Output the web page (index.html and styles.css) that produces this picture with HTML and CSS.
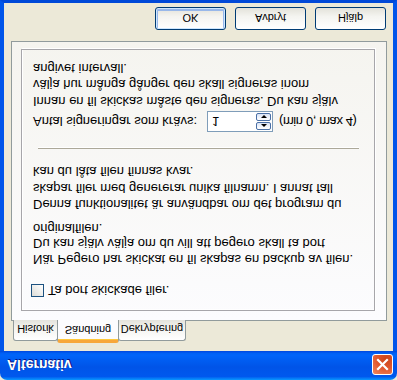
FILE: index.html
```html
<!DOCTYPE html>
<html lang="sv">
<head>
<meta charset="utf-8">
<title>Alternativ</title>
<link rel="stylesheet" href="styles.css">
</head>
<body>
<div class="window">
  <div class="titlebar">
    <span class="title">Alternativ</span>
    <button class="close" aria-label="Stäng">
      <svg width="13" height="13" viewBox="0 0 13 13"><path d="M2 2 L11 11 M11 2 L2 11" stroke="#fff" stroke-width="2.2" stroke-linecap="square"/></svg>
    </button>
  </div>
  <div class="frame">
    <div class="tabs">
      <div class="tab t1">Historik</div>
      <div class="tab t2 active">Sändning</div>
      <div class="tab t3">Dekryptering</div>
    </div>
    <div class="panel">
      <div class="group">
        <label class="check-row"><span class="checkbox"></span>Ta bort skickade filer.</label>
        <p class="para p1">När Pegero har skickat en fil skapas en backup av filen.<br>Du kan själv välja om du vill att pegero skall ta bort<br>originalfilen.</p>
        <p class="para p2">Denna funktionalitet är användbar om det program du<br>skapar filer med genererar unika filnamn. I annat fall<br>kan du låta filen finnas kvar.</p>
        <div class="sep"></div>
        <div class="spin-row">
          <span class="spin-label">Antal signeringar som krävs:</span>
          <div class="spin">
            <span class="spin-val">1</span>
            <div class="spin-btns">
              <span class="sb up"><i></i></span>
              <span class="sb down"><i></i></span>
            </div>
          </div>
          <span class="spin-hint">(min 0, max 4)</span>
        </div>
        <p class="para p3">Innan en fil skickas måste den signeras. Du kan själv<br>välja hur många gånger den skall signeras inom<br>angivet intervall.</p>
      </div>
    </div>
    <div class="buttons">
      <button class="btn default">OK</button>
      <button class="btn">Avbryt</button>
      <button class="btn">Hjälp</button>
    </div>
  </div>
</div>
</body>
</html>
```
FILE: styles.css
```css
* { box-sizing: border-box; }
html, body { margin: 0; padding: 0; background: #ECE9D8; }
body { width: 397px; height: 380px; overflow: hidden; font-family: "Liberation Sans", Arial, sans-serif; color: #000; }

.window {
  width: 397px;
  height: 380px;
  display: flex;
  flex-direction: column;
  transform: scaleY(-1);
  background: #ECE9D8;
}

.titlebar {
  height: 29px;
  flex: none;
  display: flex;
  align-items: center;
  justify-content: space-between;
  padding: 0 4px 0 7px;
  border-radius: 7px 7px 0 0;
  background: linear-gradient(#0997FF 0%, #0058EE 12%, #0054E8 45%, #0064F9 85%, #0060F5 92%, #0046DD 100%);
}
.title {
  color: #fff;
  font-weight: bold;
  font-size: 14px;
  text-shadow: 1px 1px 0 #0A1883;
  margin-top: 1px;
}
.close {
  width: 21px;
  height: 21px;
  padding: 0;
  border: 1px solid #fff;
  border-radius: 3px;
  background: radial-gradient(circle at 70% 80%, #CC4419 0%, #E1582F 50%, #F08860 100%);
  display: flex;
  align-items: center;
  justify-content: center;
  margin-top: 1px;
}

.frame {
  flex: 1;
  display: flex;
  flex-direction: column;
  border-left: 4px solid #0055EA;
  border-right: 4px solid #0055EA;
  border-bottom: 3px solid #0049D8;
  padding: 9px 6px 0 7px;
}

.tabs {
  height: 22px;
  display: flex;
  align-items: flex-end;
  padding-left: 2px;
  position: relative;
  z-index: 1;
  margin-bottom: -1px;
}
.tab {
  height: 21px;
  font-size: 11px;
  display: flex;
  align-items: center;
  justify-content: center;
  border: 1px solid #919B9C;
  border-bottom: none;
  border-radius: 3px 3px 0 0;
  background: linear-gradient(#FFFFFF, #F3F3EF 60%, #E4E3DC);
  padding-top: 1px;
}
.t1 { width: 45px; }
.t2 { width: 62px; margin-left: -1px; }
.t3 { width: 68px; margin-left: -1px; }
.tab.active {
  height: 23px;
  background: #FCFCFE;
  border-top: 3px solid #F7A73A;
  box-shadow: inset 0 1px 0 #FFC83C;
  padding-top: 0;
  position: relative;
  z-index: 2;
}

.panel {
  height: 280px;
  width: 376px;
  border: 1px solid #919B9C;
  background: linear-gradient(#FCFCFE, #F5F4EF);
  padding: 9px 11px 7px 9px;
  display: flex;
}
.group {
  flex: 1;
  border: 1px solid #A7A6AA;
  box-shadow: 1px 1px 0 #FFFFFF, inset 1px 1px 0 #FFFFFF;
  padding: 11px 10px 0 9px;
  font-size: 13px;
  line-height: 16px;
}

.check-row {
  display: flex;
  align-items: center;
  height: 17px;
  gap: 4px;
}
.checkbox {
  width: 13px;
  height: 13px;
  border: 1px solid #1C5180;
  background: linear-gradient(135deg, #DCDCD7, #FFFFFF);
  flex: none;
}

.para { margin: 0; padding-left: 2px; }
.p1 { margin-top: 15px; line-height: 15.5px; }
.p2 { margin-top: 8px; line-height: 16.5px; }
.p3 { margin-top: 2px; line-height: 16.5px; }

.sep {
  margin: 14px 5px 0 7px;
  height: 2px;
  border-top: 1px solid #ACA899;
  border-bottom: 1px solid #FFFFFF;
}

.spin-row {
  margin-top: 15px;
  display: flex;
  align-items: center;
  height: 21px;
  padding-left: 2px;
}
.spin-label { width: 174px; }
.spin {
  width: 66px;
  height: 21px;
  border: 1px solid #7F9DB9;
  background: #fff;
  display: flex;
  align-items: center;
  justify-content: space-between;
  padding: 1px 1px 1px 4px;
}
.spin-val { line-height: 16px; }
.spin-btns {
  width: 15px;
  height: 17px;
  display: flex;
  flex-direction: column;
  gap: 1px;
}
.sb {
  flex: 1;
  border: 1px solid #4A6FA5;
  border-radius: 2px;
  background: linear-gradient(#FFFFFF, #D9E3F5);
  display: flex;
  align-items: center;
  justify-content: center;
}
.sb i {
  width: 0;
  height: 0;
  border-left: 3px solid transparent;
  border-right: 3px solid transparent;
}
.up i { border-bottom: 3px solid #000; }
.down i { border-top: 3px solid #000; }
.spin-hint { margin-left: 6px; letter-spacing: -0.4px; }

.buttons {
  margin-top: 11px;
  display: flex;
  justify-content: flex-end;
  gap: 9px;
  padding-right: 1px;
}
.btn {
  width: 71px;
  height: 23px;
  font-family: "Liberation Sans", Arial, sans-serif;
  font-size: 11px;
  color: #000;
  border: 1px solid #003C74;
  border-radius: 3px;
  background: linear-gradient(#FFFFFF, #F4F4F0 60%, #E3E2DA);
  padding: 0;
}
.btn.default {
  box-shadow: inset 0 0 0 1px #CEE7FF, inset 0 -1px 0 2px #98B8EA;
}
```
